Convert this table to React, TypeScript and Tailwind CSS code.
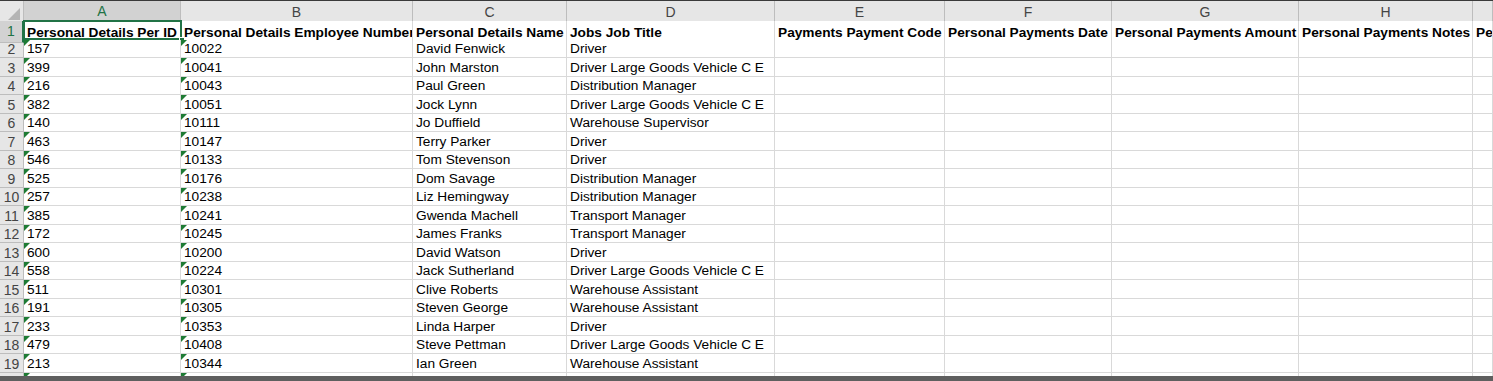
const font = { fontFamily: '"Liberation Sans", Arial, sans-serif' };

const columns = ["A", "B", "C", "D", "E", "F", "G", "H", ""];

const headers = [
  "Personal Details Per ID",
  "Personal Details Employee Number",
  "Personal Details Name",
  "Jobs Job Title",
  "Payments Payment Code",
  "Personal Payments Date",
  "Personal Payments Amount",
  "Personal Payments Notes",
  "Personal Payments Type",
];

const rows: [string, string, string, string][] = [
  ["157", "10022", "David Fenwick", "Driver"],
  ["399", "10041", "John Marston", "Driver Large Goods Vehicle C E"],
  ["216", "10043", "Paul Green", "Distribution Manager"],
  ["382", "10051", "Jock Lynn", "Driver Large Goods Vehicle C E"],
  ["140", "10111", "Jo Duffield", "Warehouse Supervisor"],
  ["463", "10147", "Terry Parker", "Driver"],
  ["546", "10133", "Tom Stevenson", "Driver"],
  ["525", "10176", "Dom Savage", "Distribution Manager"],
  ["257", "10238", "Liz Hemingway", "Distribution Manager"],
  ["385", "10241", "Gwenda Machell", "Transport Manager"],
  ["172", "10245", "James Franks", "Transport Manager"],
  ["600", "10200", "David Watson", "Driver"],
  ["558", "10224", "Jack Sutherland", "Driver Large Goods Vehicle C E"],
  ["511", "10301", "Clive Roberts", "Warehouse Assistant"],
  ["191", "10305", "Steven George", "Warehouse Assistant"],
  ["233", "10353", "Linda Harper", "Driver"],
  ["479", "10408", "Steve Pettman", "Driver Large Goods Vehicle C E"],
  ["213", "10344", "Ian Green", "Warehouse Assistant"],
  ["", "", "", ""],
];

const grid = "grid grid-cols-[24px_157px_232px_154px_208px_170px_167px_187px_174px_1fr]";

function Flag() {
  return <span className="absolute left-0 top-0 h-0 w-0 border-r-[6px] border-t-[6px] border-r-transparent border-t-[#1e7b34]" />;
}

function Cell({ children, flag }: { children?: React.ReactNode; flag?: boolean }) {
  return (
    <div className="relative flex items-end overflow-hidden whitespace-nowrap border-b border-r border-[#d9d9d9] bg-white pb-[2px] pl-[3px] text-[13.7px] leading-[12px] text-black">
      {flag ? <Flag /> : null}
      {children}
    </div>
  );
}

export default function App() {
  return (
    <div className="relative h-[381px] w-[1493px] overflow-hidden border-t border-[#3a3a3a] bg-white" style={font}>
      <div className={`${grid} h-5`}>
        <div className="relative border-b border-r border-[#bdbdbd] bg-[#e6e6e6]">
          <span className="absolute bottom-[3px] right-[3px] h-0 w-0 border-b-[12px] border-l-[12px] border-b-[#b4b4b4] border-l-transparent" />
        </div>
        {columns.map((c, i) => (
          <div
            key={i}
            className={
              i === 0
                ? "flex items-center justify-center border-b-2 border-r border-b-[#217346] border-r-[#bdbdbd] bg-[#d2d2d2] text-[14px] text-[#217346]"
                : "flex items-center justify-center border-b border-r border-[#bdbdbd] bg-[#e6e6e6] text-[14px] text-[#444]"
            }
          >
            {c}
          </div>
        ))}
      </div>
      <div className={`${grid} relative h-[18.5px]`}>
        <div className="flex items-center justify-center border-b border-r-2 border-b-[#bdbdbd] border-r-[#217346] bg-[#d2d2d2] text-[14px] text-[#217346]">1</div>
        {headers.map((h, i) => (
          <div key={i} className="relative flex items-end overflow-hidden whitespace-nowrap border-b border-r border-[#d9d9d9] bg-white pb-px pl-[3px] text-[13.7px] font-bold leading-4 text-black">
            {h}
          </div>
        ))}
        <div className="pointer-events-none absolute left-[23px] top-[-1px] h-[20px] w-[159px] border-2 border-[#217346]" />
        <div className="absolute left-[179px] top-[16px] h-[6px] w-[6px] border border-white bg-[#217346]" />
      </div>
      {rows.map((r, idx) => (
        <div key={idx} className={`${grid} h-[18.5px]`}>
          <div className="flex items-end justify-center border-b border-r border-[#bdbdbd] bg-[#e6e6e6] pb-[2px] text-[14px] leading-[12px] text-[#444]">
            {idx < 18 ? idx + 2 : ""}
          </div>
          <Cell flag>{r[0]}</Cell>
          <Cell flag>{r[1]}</Cell>
          <Cell>{r[2]}</Cell>
          <Cell>{r[3]}</Cell>
          <Cell />
          <Cell />
          <Cell />
          <Cell />
          <Cell />
        </div>
      ))}
      <div className="absolute left-0 top-[375px] h-[6px] w-[1493px] bg-[#5f5f5f]" />
    </div>
  );
}
